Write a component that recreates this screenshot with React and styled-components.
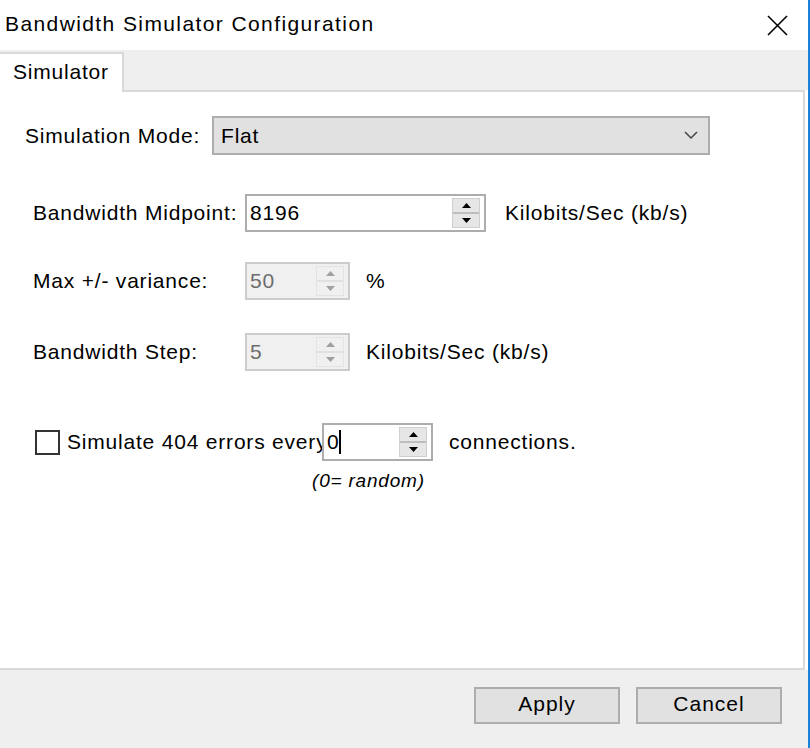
import React from 'react';
import styled, { createGlobalStyle } from 'styled-components';

const GlobalStyle = createGlobalStyle`
  html, body {
    margin: 0;
    padding: 0;
    background: #fff;
  }
  body {
    font-family: "Liberation Sans", Arial, sans-serif;
    font-size: 21px;
    letter-spacing: 0.8px;
    color: #000;
  }
`;

const Window = styled.div`
  width: 810px;
  height: 748px;
  box-sizing: border-box;
  border-right: 2px solid #1883d7;
  display: flex;
  flex-direction: column;
  overflow: hidden;
`;

const TitleBar = styled.div`
  height: 50px;
  flex-shrink: 0;
  display: flex;
  align-items: center;
  justify-content: space-between;
  padding: 0 20px 0 5px;
  background: #fff;
`;

const Title = styled.div`
  font-size: 21px;
  letter-spacing: 1.4px;
  padding-bottom: 2px;
`;

const CloseButton = styled.div`
  width: 22px;
  height: 22px;
  display: flex;
  align-items: center;
  justify-content: center;
`;

const TabStrip = styled.div`
  height: 40px;
  flex-shrink: 0;
  background: #efefef;
  display: flex;
  align-items: flex-end;
`;

const Tab = styled.div`
  height: 40px;
  width: 124px;
  box-sizing: border-box;
  margin-bottom: -2px;
  background: #fff;
  border-top: 2px solid #d9d9d9;
  border-right: 2px solid #d9d9d9;
  padding: 6px 0 0 13px;
  position: relative;
  z-index: 1;
`;

const Panel = styled.div`
  flex: 1;
  background: #fff;
  border-top: 2px solid #d9d9d9;
  border-right: 2px solid #d9d9d9;
  border-bottom: 2px solid #d9d9d9;
  margin-right: 3px;
  padding-top: 24px;
  display: flex;
  flex-direction: column;
`;

const Row = styled.div`
  display: flex;
  align-items: center;
  margin-top: ${(p) => p.$top || 0}px;
  padding-left: ${(p) => p.$indent || 33}px;
`;

const Label = styled.div`
  width: ${(p) => p.$width}px;
  flex-shrink: 0;
  white-space: nowrap;
  overflow: hidden;
`;

const Combo = styled.div`
  width: 498px;
  height: 39px;
  box-sizing: border-box;
  background: #e1e1e1;
  border: 2px solid #adadad;
  display: flex;
  align-items: center;
  justify-content: space-between;
  padding: 0 10px 0 7px;
`;

const SpinBox = styled.div`
  width: ${(p) => p.$width}px;
  height: 38px;
  box-sizing: border-box;
  border: 2px solid ${(p) => (p.$disabled ? '#cccccc' : '#adadad')};
  background: ${(p) => (p.$disabled ? '#f0f0f0' : '#fff')};
  color: ${(p) => (p.$disabled ? '#6d6d6d' : '#000')};
  display: flex;
  align-items: center;
  justify-content: space-between;
  padding: 0 4px 0 3px;
  flex-shrink: 0;
`;

const Value = styled.span`
  display: flex;
  align-items: center;
`;

const Caret = styled.span`
  display: inline-block;
  width: 2px;
  height: 24px;
  background: #000;
`;

const Spinner = styled.div`
  width: 28px;
  height: 30px;
  box-sizing: border-box;
  display: flex;
  flex-direction: column;
  background: ${(p) => (p.$disabled ? '#f0f0f0' : '#e6e6e6')};
  border: 1px solid ${(p) => (p.$disabled ? '#e3e3e3' : '#cfcfcf')};
`;

const SpinHalf = styled.div`
  flex: 1;
  display: flex;
  align-items: center;
  justify-content: center;
  border-top: ${(p) => (p.$lower ? `2px solid ${p.$disabled ? '#e0e0e0' : '#bdbdbd'}` : 'none')};
`;

const Unit = styled.div`
  margin-left: ${(p) => p.$gap}px;
  white-space: nowrap;
`;

const CheckRow = styled.div`
  display: flex;
  align-items: center;
  margin-top: 52px;
  padding-left: 35px;
`;

const CheckBox = styled.div`
  width: 25px;
  height: 25px;
  box-sizing: border-box;
  border: 2px solid #333;
  background: #fff;
  flex-shrink: 0;
  margin-right: 7px;
`;

const Hint = styled.div`
  font-style: italic;
  font-size: 19px;
  letter-spacing: 0.8px;
  padding-left: 312px;
  margin-top: 9px;
`;

const Footer = styled.div`
  height: 78px;
  box-sizing: border-box;
  flex-shrink: 0;
  background: #efefef;
  display: flex;
  justify-content: flex-end;
  align-items: flex-start;
  gap: 16px;
  padding: 17px 26px 0 0;
`;

const Button = styled.button`
  width: 146px;
  height: 37px;
  box-sizing: border-box;
  background: #e1e1e1;
  border: 2px solid #adadad;
  font-family: inherit;
  font-size: 21px;
  letter-spacing: 1px;
  color: #000;
  padding: 0 0 3px;
`;

const Arrow = ({ up, disabled }) => (
  <svg width="9" height="5" viewBox="0 0 9 5">
    <polygon
      points={up ? '4.5,0 9,5 0,5' : '0,0 9,0 4.5,5'}
      fill={disabled ? '#a0a0a0' : '#000'}
    />
  </svg>
);

const Spin = ({ width, value, disabled, caret }) => (
  <SpinBox $width={width} $disabled={disabled}>
    <Value>
      {value}
      {caret && <Caret />}
    </Value>
    <Spinner $disabled={disabled}>
      <SpinHalf $disabled={disabled}>
        <Arrow up disabled={disabled} />
      </SpinHalf>
      <SpinHalf $lower $disabled={disabled}>
        <Arrow disabled={disabled} />
      </SpinHalf>
    </Spinner>
  </SpinBox>
);

const App = () => (
  <>
    <GlobalStyle />
    <Window>
      <TitleBar>
        <Title>Bandwidth Simulator Configuration</Title>
        <CloseButton>
          <svg width="21" height="21" viewBox="0 0 21 21">
            <path d="M1 1 L20 20 M20 1 L1 20" stroke="#000" strokeWidth="1.6" />
          </svg>
        </CloseButton>
      </TitleBar>
      <TabStrip>
        <Tab>Simulator</Tab>
      </TabStrip>
      <Panel>
        <Row $indent={25}>
          <Label $width={187}>Simulation Mode:</Label>
          <Combo>
            <span>Flat</span>
            <svg width="14" height="9" viewBox="0 0 14 9">
              <path d="M1 1 L7 7 L13 1" fill="none" stroke="#444" strokeWidth="1.5" />
            </svg>
          </Combo>
        </Row>
        <Row $top={39}>
          <Label $width={212}>Bandwidth Midpoint:</Label>
          <Spin width={241} value="8196" />
          <Unit $gap={19}>Kilobits/Sec (kb/s)</Unit>
        </Row>
        <Row $top={30}>
          <Label $width={212}>Max +/- variance:</Label>
          <Spin width={105} value="50" disabled />
          <Unit $gap={16}>%</Unit>
        </Row>
        <Row $top={33}>
          <Label $width={212}>Bandwidth Step:</Label>
          <Spin width={105} value="5" disabled />
          <Unit $gap={16}>Kilobits/Sec (kb/s)</Unit>
        </Row>
        <CheckRow>
          <CheckBox />
          <Label $width={255}>Simulate 404 errors every</Label>
          <Spin width={111} value="0" caret />
          <Unit $gap={16}>connections.</Unit>
        </CheckRow>
        <Hint>(0= random)</Hint>
      </Panel>
      <Footer>
        <Button>Apply</Button>
        <Button>Cancel</Button>
      </Footer>
    </Window>
  </>
);

export default App;
